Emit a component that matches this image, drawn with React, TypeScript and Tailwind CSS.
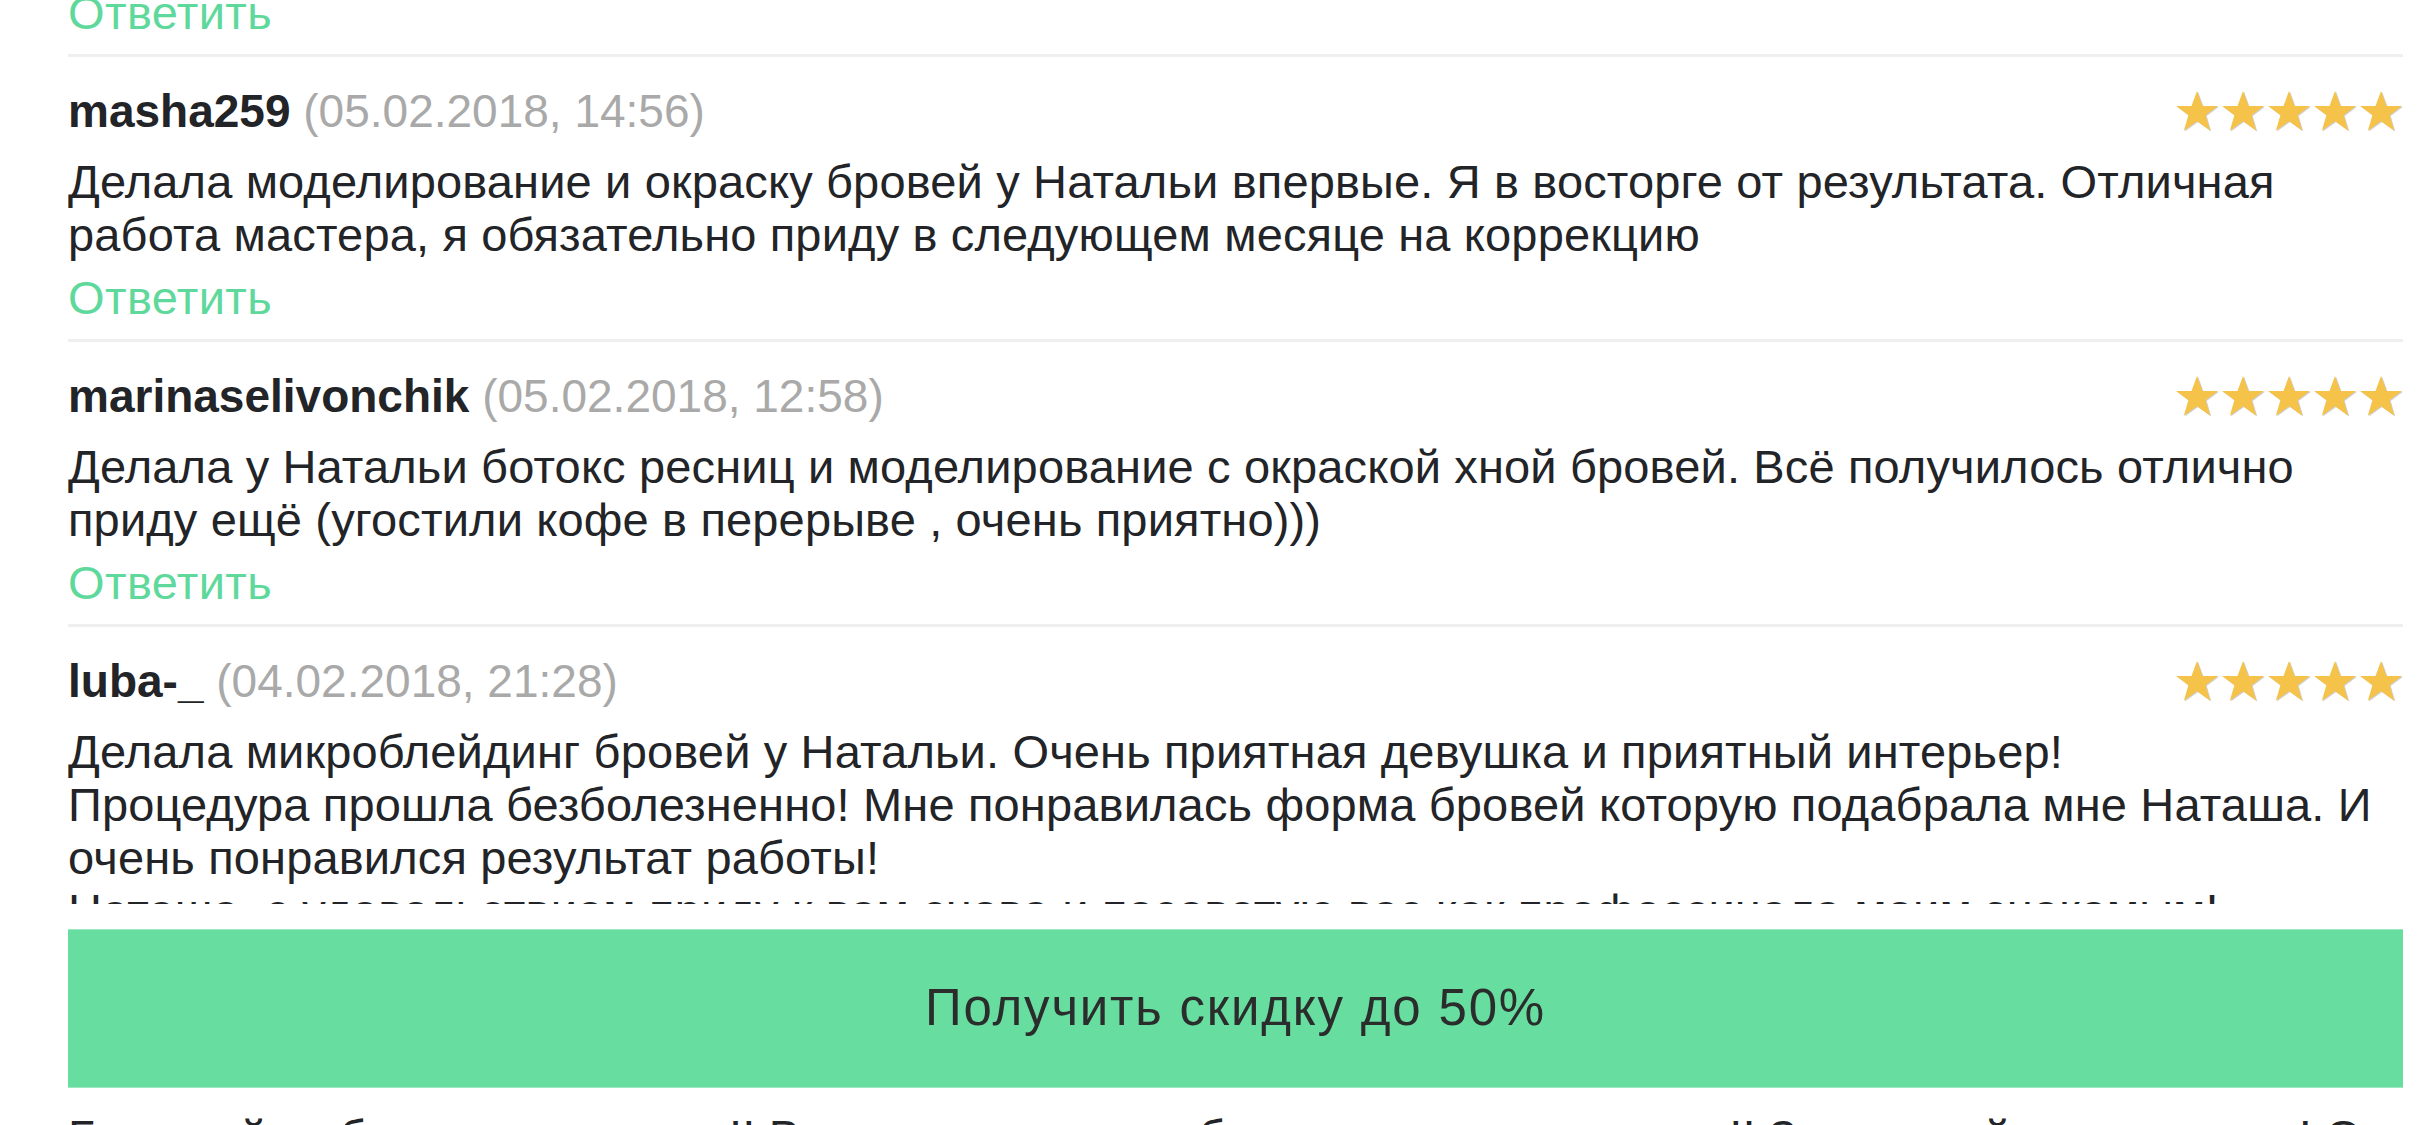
import React from "react";

type Review = {
  user: string;
  date: string;
  text: string[];
};

const reviews: Review[] = [
  {
    user: "masha259",
    date: "(05.02.2018, 14:56)",
    text: [
      "Делала моделирование и окраску бровей у Натальи впервые. Я в восторге от результата. Отличная работа мастера, я обязательно приду в следующем месяце на коррекцию",
    ],
  },
  {
    user: "marinaselivonchik",
    date: "(05.02.2018, 12:58)",
    text: [
      "Делала у Натальи ботокс ресниц и моделирование с окраской хной бровей. Всё получилось отлично приду ещё (угостили кофе в перерыве , очень приятно)))",
    ],
  },
  {
    user: "luba-_",
    date: "(04.02.2018, 21:28)",
    text: [
      "Делала микроблейдинг бровей у Натальи. Очень приятная девушка и приятный интерьер!",
      "Процедура прошла безболезненно! Мне понравилась форма бровей которую подабрала мне Наташа. И очень понравился результат работы!",
      "Наташа, с удовольствием приду к вам снова и посоветую вас как профессинала моим знакомым!",
    ],
  },
];

const Star = () => (
  <svg width="44" height="44" viewBox="0 0 24 24" className="block">
    <polygon
      points="12.6,0.9 15.6,9.1 24,9.1 17.3,14.2 19.8,22.6 12.6,17.5 5.4,22.6 7.9,14.2 1.2,9.1 9.6,9.1"
      fill="#cfcfcf"
    />
    <polygon
      points="12,0.5 15,8.7 23.4,8.7 16.7,13.8 19.2,22.2 12,17.1 4.8,22.2 7.3,13.8 0.6,8.7 9,8.7"
      fill="#f5c24a"
    />
  </svg>
);

const Stars = () => (
  <div className="flex gap-[2px]">
    {[0, 1, 2, 3, 4].map((i) => (
      <Star key={i} />
    ))}
  </div>
);

const Reply = () => (
  <div className="text-[#5fd99b] text-[47px] tracking-[0.4px] leading-[53px]">Ответить</div>
);

const ReviewItem = ({ review }: { review: Review }) => (
  <div>
    {/* divider */}
    <div className="h-[3px] mt-[15px] bg-[#efefef]" />

    <div className="pt-[28px] flex items-center justify-between leading-[53px]">
      <div>
        <span className="font-bold text-[#222427]">{review.user}</span>{" "}
        <span className="text-[#a9a9a9]">{review.date}</span>
      </div>
      <Stars />
    </div>

    <div className="mt-[17px] text-[#222427] text-[47px] tracking-[0.15px] leading-[53px]">
      {review.text.map((line, i) => (
        <div key={i}>{line}</div>
      ))}
    </div>

    <div className="mt-[10px]">
      <Reply />
    </div>
  </div>
);

export default function App() {
  return (
    <div
      className="bg-white w-[2436px] h-[1125px] overflow-hidden text-[46px]"
      style={{ fontFamily: '"Liberation Sans", Arial, sans-serif' }}
    >
      <div className="h-[904px] overflow-hidden px-[68px] pr-[33px]">
        <div className="-mt-[14px]">
          <Reply />
          {reviews.map((r) => (
            <ReviewItem key={r.user} review={r} />
          ))}
        </div>
      </div>

      <div className="px-[68px] pr-[33px] mt-[25px]">
        <button className="w-full h-[159px] bg-[#67de9f] border-y border-[#9ae9c1] flex items-center justify-center text-[#2a2d2c] text-[51px] tracking-[1.8px]">
          Получить скидку до 50%
        </button>
      </div>

      <div className="px-[68px] pr-[33px] mt-[22px] text-[#222427] text-[47px] tracking-[0.15px] leading-[53px] whitespace-nowrap">
        Большой выбор услуг для вас!! В нашем салоне работают лучшие мастера!! Записывайтесь заранее! Оставьте заявку
      </div>
    </div>
  );
}
